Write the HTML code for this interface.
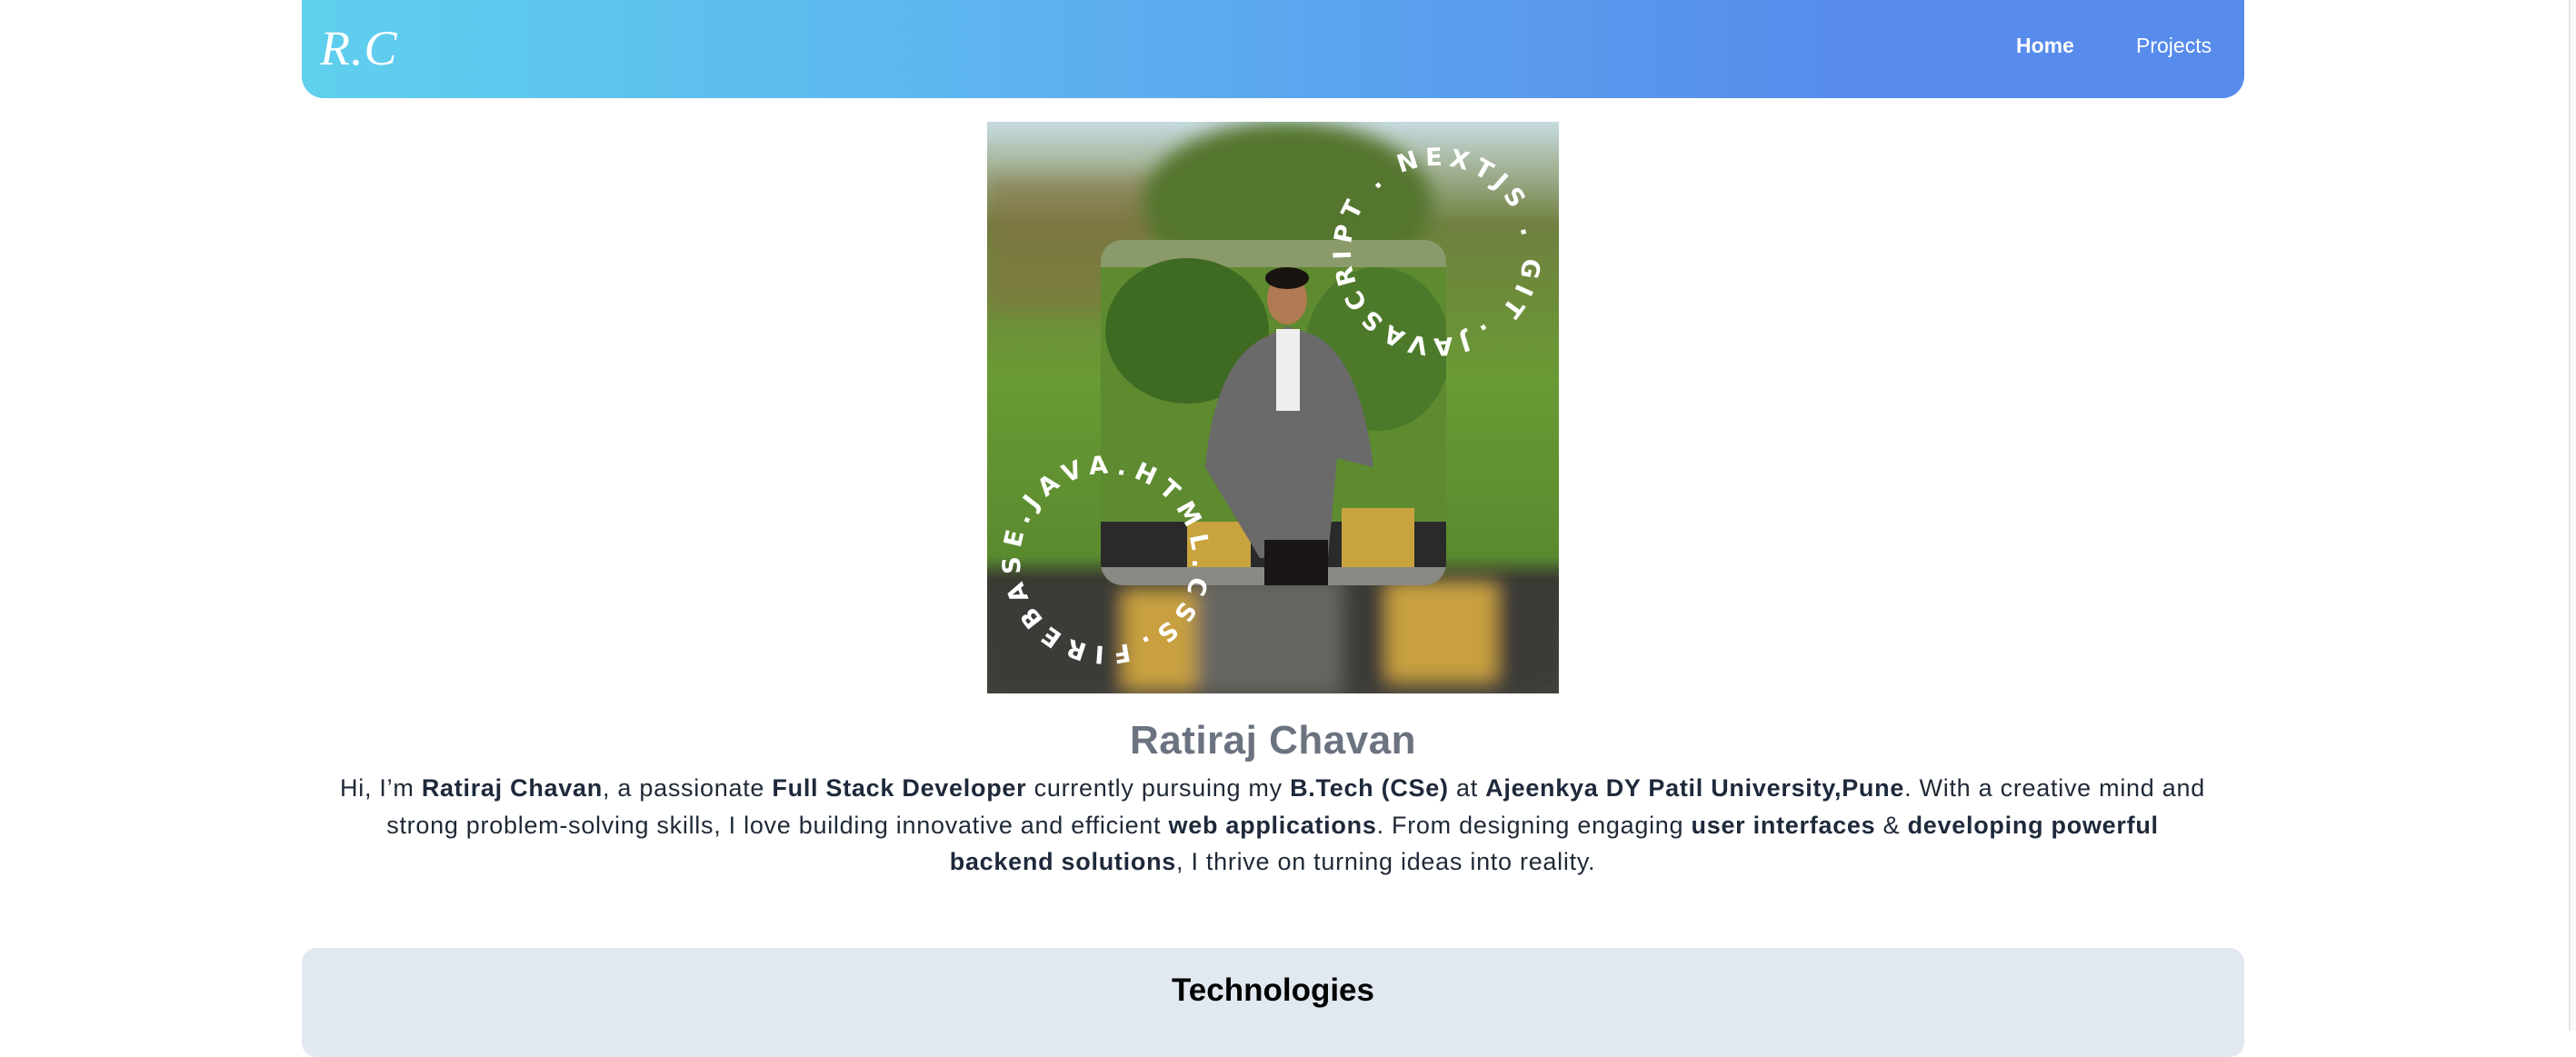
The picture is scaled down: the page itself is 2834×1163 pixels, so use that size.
<!DOCTYPE html>
<html><head><meta charset="utf-8"><style>
*{margin:0;padding:0;box-sizing:border-box}
html,body{width:2834px;height:1134px;overflow:hidden;background:#fff;font-family:"Liberation Sans",sans-serif}
.sb{position:absolute;left:2826px;top:0;width:8px;height:1134px;background:#fafafa;border-left:2px solid #e6e6e6}
nav{position:absolute;left:332px;top:0;width:2137px;height:108px;border-radius:0 0 24px 24px;background:linear-gradient(90deg,#5fd0ee 0%,#5db0ef 40%,#578bec 80%,#578bec 100%)}
.logo{position:absolute;left:20px;top:22px;color:#fff;font-family:"Liberation Serif",serif;font-style:italic;font-size:54px;letter-spacing:1px}
.nl{position:absolute;top:37px;color:#fff;font-size:23px}
.photo{position:absolute;left:1086px;top:134px;width:629px;height:629px}
h1{position:absolute;left:332px;width:2137px;top:790px;text-align:center;font-size:44px;color:#6b7280;font-weight:bold;letter-spacing:0.5px}
p.d{position:absolute;left:366px;width:2068px;top:847px;text-align:center;font-size:27px;line-height:40.5px;color:#1f2937;letter-spacing:0.72px}
p.d b{color:#1e293b}
.tech{position:absolute;left:332px;top:1043px;width:2137px;height:120px;background:#e2e8f0;border-radius:16px}
.tech h2{text-align:center;font-size:35px;margin-top:27px;color:#000}
</style></head><body>
<div class="sb"></div>
<nav><div class="logo">R.C</div><div class="nl" style="left:1886px;font-weight:bold">Home</div><div class="nl" style="left:2018px">Projects</div></nav>
<svg class="photo" viewBox="0 0 629 629" xmlns="http://www.w3.org/2000/svg">
<defs>
<linearGradient id="bg" x1="0" y1="0" x2="0" y2="1">
<stop offset="0" stop-color="#c6dbe0"/><stop offset="0.07" stop-color="#a8b8a0"/><stop offset="0.18" stop-color="#6f8040"/><stop offset="0.45" stop-color="#6a9a34"/><stop offset="0.76" stop-color="#5a8a2e"/><stop offset="0.8" stop-color="#3a3a32"/><stop offset="1" stop-color="#4a4640"/>
</linearGradient>
<filter id="bl"><feGaussianBlur stdDeviation="10"/></filter>
<clipPath id="ic"><rect x="125" y="130" width="380" height="380" rx="24"/></clipPath>
<path id="c1" d="M400,143 a95,95 0 1,1 190,0 a95,95 0 1,1 -190,0"/>
<path id="c2" d="M36,482 a95,95 0 1,1 190,0 a95,95 0 1,1 -190,0"/>
</defs>
<rect width="629" height="629" fill="url(#bg)"/>
<g filter="url(#bl)">
<rect x="0" y="60" width="180" height="150" fill="#8a6a40" opacity=".45"/>
<ellipse cx="330" cy="90" rx="160" ry="90" fill="#55762e"/>
<rect x="0" y="510" width="629" height="119" fill="#3a3a38"/>
<rect x="150" y="515" width="100" height="110" fill="#c8a040"/>
<rect x="440" y="505" width="120" height="110" fill="#c8a040"/>
<rect x="230" y="500" width="160" height="129" fill="#666660"/>
</g>
<g clip-path="url(#ic)">
<rect x="125" y="130" width="380" height="380" fill="#5e8a30"/>
<rect x="125" y="130" width="380" height="30" fill="#8a9a6a"/>
<ellipse cx="220" cy="230" rx="90" ry="80" fill="#3f6a22"/>
<ellipse cx="430" cy="250" rx="80" ry="90" fill="#4c7a2a"/>
<rect x="125" y="440" width="380" height="70" fill="#2a2a2a"/>
<rect x="220" y="440" width="70" height="70" fill="#c9a33e"/>
<rect x="390" y="425" width="80" height="75" fill="#c9a33e"/>
<rect x="125" y="490" width="380" height="20" fill="#8a8a85"/>
<path d="M240,380 Q250,270 300,240 L330,225 L360,235 Q410,260 425,380 L385,370 L375,480 L300,480 Z" fill="#6a6a6a"/>
<rect x="318" y="228" width="26" height="90" fill="#eee"/>
<rect x="305" y="460" width="70" height="50" fill="#1a1616"/>
<ellipse cx="330" cy="195" rx="22" ry="28" fill="#b07a52"/>
<ellipse cx="330" cy="172" rx="24" ry="12" fill="#1a1410"/>
</g>
<g font-family="'DejaVu Sans',sans-serif" font-weight="bold" font-size="27" fill="#fff">
<g transform="rotate(-110 495 143)"><text><textPath href="#c1" textLength="582" lengthAdjust="spacing">JAVASCRIPT . NEXTJS . GIT . </textPath></text></g>
<g transform="rotate(-105 131 482)"><text><textPath href="#c2" textLength="582" lengthAdjust="spacing">FIREBASE.JAVA.HTML.CSS.</textPath></text></g>
</g>
</svg>
<h1>Ratiraj Chavan</h1>
<p class="d">Hi, I’m <b>Ratiraj Chavan</b>, a passionate <b>Full Stack Developer</b> currently pursuing my <b>B.Tech (CSe)</b> at <b>Ajeenkya DY Patil University,Pune</b>. With a creative mind and strong problem-solving skills, I love building innovative and efficient <b>web applications</b>. From designing engaging <b>user interfaces</b> &amp; <b>developing powerful backend solutions</b>, I thrive on turning ideas into reality.</p>
<div class="tech"><h2>Technologies</h2></div>
</body></html>
